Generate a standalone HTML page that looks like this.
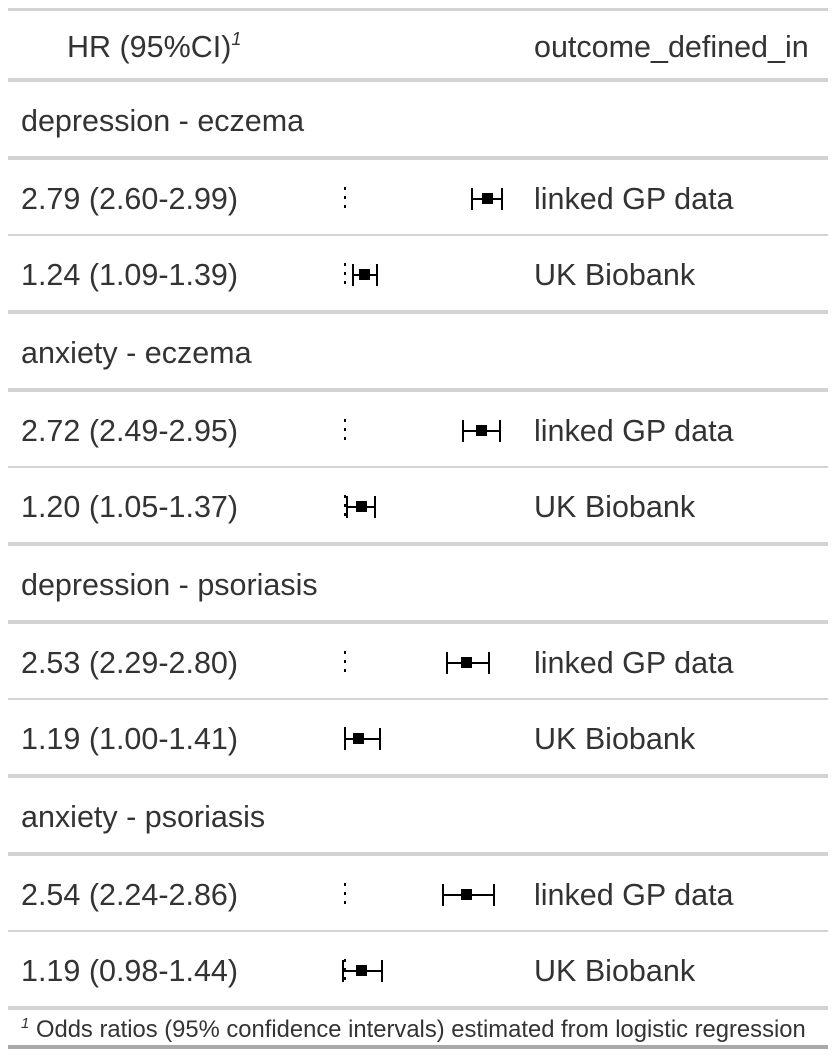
<!DOCTYPE html>
<html><head><meta charset="utf-8"><style>
html,body{margin:0;padding:0;background:#fff;}
body{width:836px;height:1058px;position:relative;overflow:hidden;font-family:"Liberation Sans",sans-serif;color:#333;}
.l{position:absolute;left:8px;width:820px;background:#d3d3d3;}
.t{position:absolute;font-size:30.5px;line-height:36px;white-space:nowrap;}
svg{position:absolute;left:0;top:0;}
</style></head><body>
<div class="l" style="top:8px;height:3px"></div>
<div class="l" style="top:78px;height:4px"></div>
<div class="l" style="top:156px;height:4px"></div>
<div class="l" style="top:234px;height:2px"></div>
<div class="l" style="top:310px;height:4px"></div>
<div class="l" style="top:388px;height:4px"></div>
<div class="l" style="top:466px;height:2px"></div>
<div class="l" style="top:542px;height:4px"></div>
<div class="l" style="top:620px;height:4px"></div>
<div class="l" style="top:698px;height:2px"></div>
<div class="l" style="top:774px;height:4px"></div>
<div class="l" style="top:852px;height:4px"></div>
<div class="l" style="top:930px;height:2px"></div>
<div class="l" style="top:1006px;height:4px"></div>
<div class="l" style="top:1045px;height:4px;background:#a8a8a8"></div>

<div class="t" style="left:67px;top:29px">HR (95%CI)<sup style="font-size:18px;font-style:italic;vertical-align:top;line-height:20px">1</sup></div>
<div class="t" style="left:534px;top:29px">outcome_defined_in</div>

<div class="t" style="left:21px;top:103px">depression - eczema</div>
<div class="t" style="left:21px;top:181px">2.79 (2.60-2.99)</div><div class="t" style="left:534px;top:181px">linked GP data</div>
<div class="t" style="left:21px;top:257px">1.24 (1.09-1.39)</div><div class="t" style="left:534px;top:257px">UK Biobank</div>
<div class="t" style="left:21px;top:335px">anxiety - eczema</div>
<div class="t" style="left:21px;top:413px">2.72 (2.49-2.95)</div><div class="t" style="left:534px;top:413px">linked GP data</div>
<div class="t" style="left:21px;top:489px">1.20 (1.05-1.37)</div><div class="t" style="left:534px;top:489px">UK Biobank</div>
<div class="t" style="left:21px;top:567px">depression - psoriasis</div>
<div class="t" style="left:21px;top:645px">2.53 (2.29-2.80)</div><div class="t" style="left:534px;top:645px">linked GP data</div>
<div class="t" style="left:21px;top:721px">1.19 (1.00-1.41)</div><div class="t" style="left:534px;top:721px">UK Biobank</div>
<div class="t" style="left:21px;top:799px">anxiety - psoriasis</div>
<div class="t" style="left:21px;top:877px">2.54 (2.24-2.86)</div><div class="t" style="left:534px;top:877px">linked GP data</div>
<div class="t" style="left:21px;top:953px">1.19 (0.98-1.44)</div><div class="t" style="left:534px;top:953px">UK Biobank</div>

<div style="position:absolute;left:21px;top:1016px;font-size:23.8px;line-height:28px;white-space:nowrap"><sup style="font-size:15px;font-style:italic;vertical-align:top;line-height:16px">1</sup> Odds ratios (95% confidence intervals) estimated from logistic regression</div>

<svg width="836" height="1058" stroke="#000" fill="#000">
<g stroke-width="2" stroke-dasharray="3,6">
<line x1="345" y1="187" x2="345" y2="212"/>
<line x1="345" y1="263" x2="345" y2="288"/>
<line x1="345" y1="419" x2="345" y2="444"/>
<line x1="345" y1="495" x2="345" y2="520"/>
<line x1="345" y1="651" x2="345" y2="676"/>
<line x1="345" y1="727" x2="345" y2="752"/>
<line x1="345" y1="883" x2="345" y2="908"/>
<line x1="345" y1="959" x2="345" y2="984"/>
</g>
<g stroke-width="2">
<path d="M472 188V210M472 199H502M502 188V210"/><rect x="482" y="193" width="11" height="11" stroke="none"/>
<path d="M353 264V286M353 275H377M377 264V286"/><rect x="359" y="269" width="11" height="11" stroke="none"/>
<path d="M463 420V442M463 431H500M500 420V442"/><rect x="476" y="425" width="11" height="11" stroke="none"/>
<path d="M347 496V518M347 507H375M375 496V518"/><rect x="356" y="501" width="11" height="11" stroke="none"/>
<path d="M447 652V674M447 663H489M489 652V674"/><rect x="461" y="657" width="11" height="11" stroke="none"/>
<path d="M345 728V750M345 739H380M380 728V750"/><rect x="353" y="733" width="11" height="11" stroke="none"/>
<path d="M443 884V906M443 895H494M494 884V906"/><rect x="461" y="889" width="11" height="11" stroke="none"/>
<path d="M343 960V982M343 971H382M382 960V982"/><rect x="356" y="965" width="11" height="11" stroke="none"/>
</g>
</svg>
</body></html>
